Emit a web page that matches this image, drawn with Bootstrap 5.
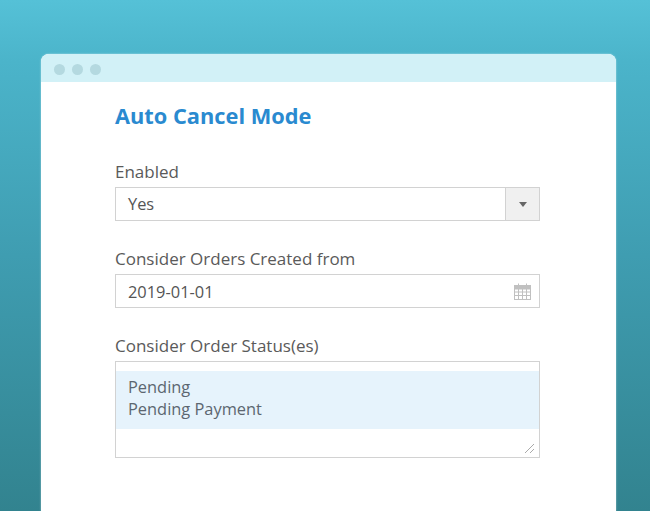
<!DOCTYPE html>
<html lang="en">
<head>
<meta charset="utf-8">
<title>Auto Cancel Mode</title>
<link rel="stylesheet" href="https://cdn.jsdelivr.net/npm/bootstrap@5.3.0/dist/css/bootstrap.min.css">
<style>
html,body{height:511px;overflow:hidden}
body{font-family:"Open Sans",sans-serif;color:#555;background:linear-gradient(180deg,#55c1d7 0%,#4bb4ca 12%,#3f9db1 50%,#32838f 100%);padding:54px 34px 0 41px}
.app-window{height:457px;background:#fff;border-radius:8px 8px 0 0;overflow:hidden;box-shadow:0 0 2px rgba(255,255,255,.6)}
.title-strip{height:28px;background:#d2f1f7;padding:2px 0 0 13px;gap:7px}
.dot-mark{width:11px;height:11px;border-radius:50%;background:#b4d9e0}
.pane-body{padding:19px 76px 0 74px}
.pane-title{font-size:21.8px;font-weight:700;line-height:29px;color:#2a8ad0;margin:0 0 32px}
.field-label{font-size:17px;line-height:20px;color:#5a5a5a;margin:0 0 5px;display:block}
.field-block{margin-bottom:28px}
.box-field{height:34px;border:1px solid #d2d2d2;background:#fff;font-size:16.4px;line-height:31px;color:#555;padding-left:12px}
.caret-cell{width:34px;background:#f0f0f0;border-left:1px solid #d2d2d2}
.caret-shape{width:0;height:0;border-left:4px solid transparent;border-right:4px solid transparent;border-top:5px solid #666}
.list-field{height:97px;border:1px solid #d2d2d2;padding-top:9px;position:relative;font-size:16.4px;line-height:22px;color:#5c6670}
.picked-rows{background:#e6f3fc;padding:5px 12px 3px;height:58px}
.grip-mark{position:absolute;right:4px;bottom:3px}
.cal-mark{margin-right:8px}
</style>
</head>
<body>
<div class="app-window">
  <div class="title-strip d-flex align-items-center">
    <span class="dot-mark"></span><span class="dot-mark"></span><span class="dot-mark"></span>
  </div>
  <div class="pane-body">
    <h1 class="pane-title">Auto Cancel Mode</h1>
    <div class="field-block">
      <label class="field-label">Enabled</label>
      <div class="box-field d-flex justify-content-between">
        <span>Yes</span>
        <span class="caret-cell d-flex align-items-center justify-content-center"><span class="caret-shape"></span></span>
      </div>
    </div>
    <div class="field-block">
      <label class="field-label">Consider Orders Created from</label>
      <div class="box-field d-flex justify-content-between align-items-center">
        <span>2019-01-01</span>
        <svg class="cal-mark" width="17" height="17" viewBox="0 0 17 17" fill="none" stroke="#c0c0c0" stroke-width="1"><rect x=".5" y="2.500" width="16" height="14"/><rect x="1" y="3" width="15" height="3" fill="#c0c0c0"/><path d="M4.500 .5v3M12.500 .5v3M.5 9h16M.5 12.500h16M4.500 6v10M8.500 6v10M12.500 6v10"/></svg>
      </div>
    </div>
    <div class="field-block">
      <label class="field-label">Consider Order Status(es)</label>
      <div class="list-field">
        <div class="picked-rows">Pending<br>Pending Payment</div>
        <svg class="grip-mark" width="11" height="11" viewBox="0 0 11 11" fill="none" stroke="#aaa"><path d="M1 10 10 1M6 10l4-4"/></svg>
      </div>
    </div>
  </div>
</div>
<script src="https://cdn.jsdelivr.net/npm/bootstrap@5.3.0/dist/js/bootstrap.bundle.min.js"></script>
</body>
</html>
